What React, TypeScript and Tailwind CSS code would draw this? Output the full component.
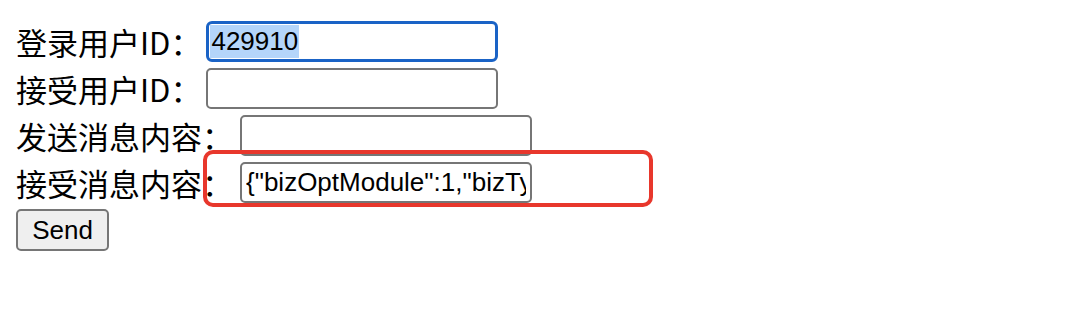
import React from "react";

const labelCls =
  "text-[31px] leading-none text-black whitespace-nowrap [font-family:'Noto_Sans_CJK_SC',sans-serif]";
const inputBase =
  "h-[41px] w-[292px] rounded-[5px] border-2 border-[#767676] bg-white px-[4px] text-[26px] text-black outline-none [font-family:'Liberation_Sans',Arial,sans-serif]";

export default function App() {
  return (
    <div className="relative h-[326px] w-[1074px] bg-white pl-[16px] pt-[21px]">
      <div className="flex flex-col gap-[6px]">
        <div className="flex items-center">
          <span className={labelCls}>登录用户ID：</span>
          <div className="ml-[5px] flex h-[41px] w-[292px] items-center rounded-[6px] border-[3px] border-[#1a63c6] bg-white px-[1px] text-[26px] text-black [font-family:'Liberation_Sans',Arial,sans-serif]">
            <span className="flex h-[33px] items-center bg-[#b4d5fa] px-[1px]">429910</span>
          </div>
        </div>
        <div className="flex items-center">
          <span className={labelCls}>接受用户ID：</span>
          <input className={`ml-[5px] ${inputBase}`} readOnly value="" />
        </div>
        <div className="flex items-center">
          <span className={labelCls}>发送消息内容：</span>
          <input className={`ml-[7px] ${inputBase}`} readOnly value="" />
        </div>
        <div className="flex items-center">
          <span className={labelCls}>接受消息内容：</span>
          <input
            className={`ml-[7px] ${inputBase}`}
            readOnly
            value={'{"bizOptModule":1,"bizType":2,"content":"hello"}'}
          />
        </div>
        <div className="flex">
          <button className="h-[42px] w-[93px] rounded-[5px] border-2 border-[#767676] bg-[#efefef] text-[26px] text-black [font-family:'Liberation_Sans',Arial,sans-serif]">
            Send
          </button>
        </div>
      </div>
      <div className="pointer-events-none absolute left-[203px] top-[150px] h-[57px] w-[450px] rounded-[10px] border-[4px] border-[#e8372c]" />
    </div>
  );
}
